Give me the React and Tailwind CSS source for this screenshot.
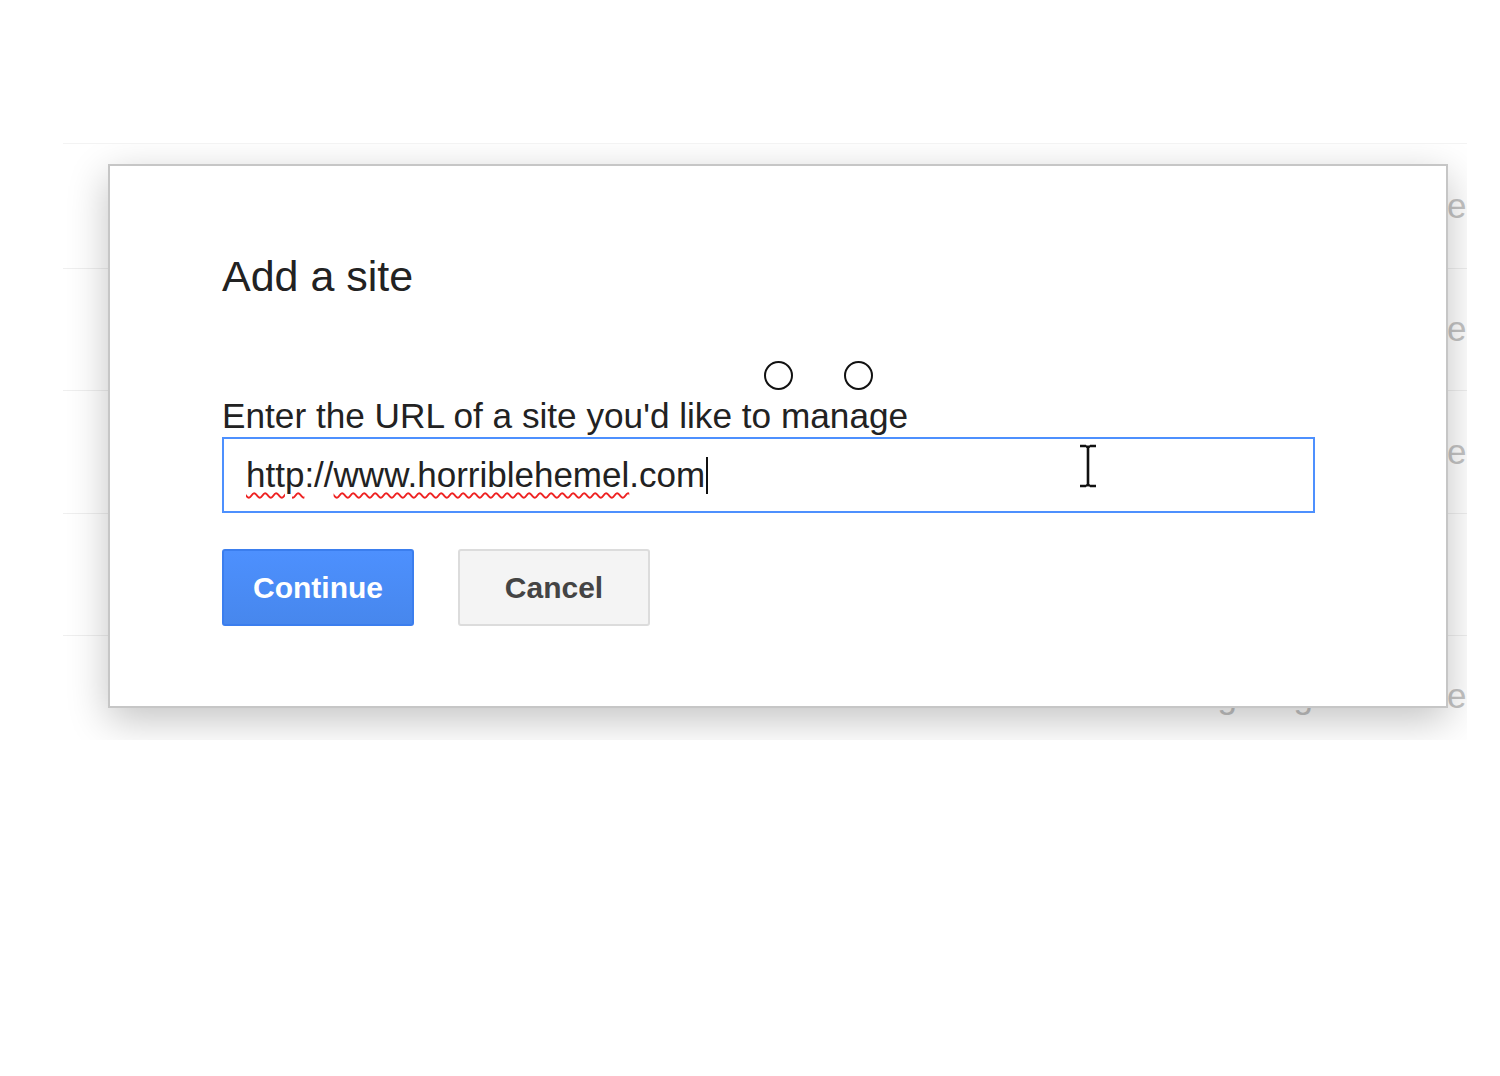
import React from 'react';

const rows = [
  { h: 'h-[125px]', text: 'Not verified' },
  { h: 'h-[122px]', text: 'Not verified' },
  { h: 'h-[123px]', text: 'Not verified' },
  { h: 'h-[122px]', text: '' },
  { h: 'h-[122px]', text: 'See message log for verified' },
];

const IBeam = () => (
  <svg width="22" height="44" viewBox="0 0 22 44" className="absolute left-[853px] top-[5px]">
    <path d="M3 2h6M13 2h6M11 3v38M3 42h6M13 42h6M9 2.5c1 0 2 .5 2 1.5M13 2.5c-1 0-2 .5-2 1.5M9 41.5c1 0 2-.5 2-1.5M13 41.5c-1 0-2-.5-2-1.5" stroke="#111" strokeWidth="2.6" fill="none" />
  </svg>
);

const AddSiteDialog = () => (
  <div className="absolute left-[45px] top-[20px] w-[1340px] h-[544px] bg-white border-2 border-[#c6c6c6] shadow-[0_12px_38px_rgba(0,0,0,0.24)] pl-[112px] pt-[86px]">
    <h2 className="text-[43px] leading-[48px] text-[#222] font-normal">Add a site</h2>

    <div className="relative mt-[96px]">
      <span className="absolute left-[542px] top-[-35px] w-[29px] h-[29px] rounded-full border-[2.5px] border-[#111]" />
      <span className="absolute left-[622px] top-[-35px] w-[29px] h-[29px] rounded-full border-[2.5px] border-[#111]" />
      <label className="block text-[35.2px] leading-[40px] text-[#222]">
        Enter the URL of a site you'd like to manage
      </label>
    </div>

    <div className="relative mt-px w-[1093px] h-[76px] border-2 border-[#4d90fe] flex items-center pl-[22px]">
      <span className="text-[35px] leading-[40px] text-[#222] whitespace-nowrap">
        <span className="underline decoration-wavy decoration-[#e22] decoration-[1.5px] underline-offset-[5px]">http</span>
        ://
        <span className="underline decoration-wavy decoration-[#e22] decoration-[1.5px] underline-offset-[5px]">www.horriblehemel</span>
        .com
      </span>
      <span className="w-[2px] h-[37px] bg-[#111] ml-px" />
      <IBeam />
    </div>

    <div className="flex gap-[44px] mt-[36px]">
      <button className="w-[192px] h-[77px] rounded-[3px] border-2 border-[#3b7eee] bg-[linear-gradient(#4d90fe,#4787ed)] text-white text-[30px] font-bold">
        Continue
      </button>
      <button className="w-[192px] h-[77px] rounded-[3px] border-2 border-[#dcdcdc] bg-[#f4f4f4] text-[#444] text-[30px] font-bold">
        Cancel
      </button>
    </div>
  </div>
);

export default function App() {
  return (
    <div className="w-[1500px] h-[1076px] bg-white pt-[143px] font-['Liberation_Sans',Arial,sans-serif]">
      <div className="relative ml-[63px] w-[1404px] h-[597px] overflow-hidden bg-white border-t border-[#f3f3f3]">
        {rows.map((r, i) => (
          <div key={i} className={`${r.h} flex items-center justify-end border-b border-[#efefef]`}>
            <span className="mr-[-19px] whitespace-nowrap text-[35px] text-[#c4c4c4]">{r.text}</span>
          </div>
        ))}
        <AddSiteDialog />
      </div>
    </div>
  );
}
